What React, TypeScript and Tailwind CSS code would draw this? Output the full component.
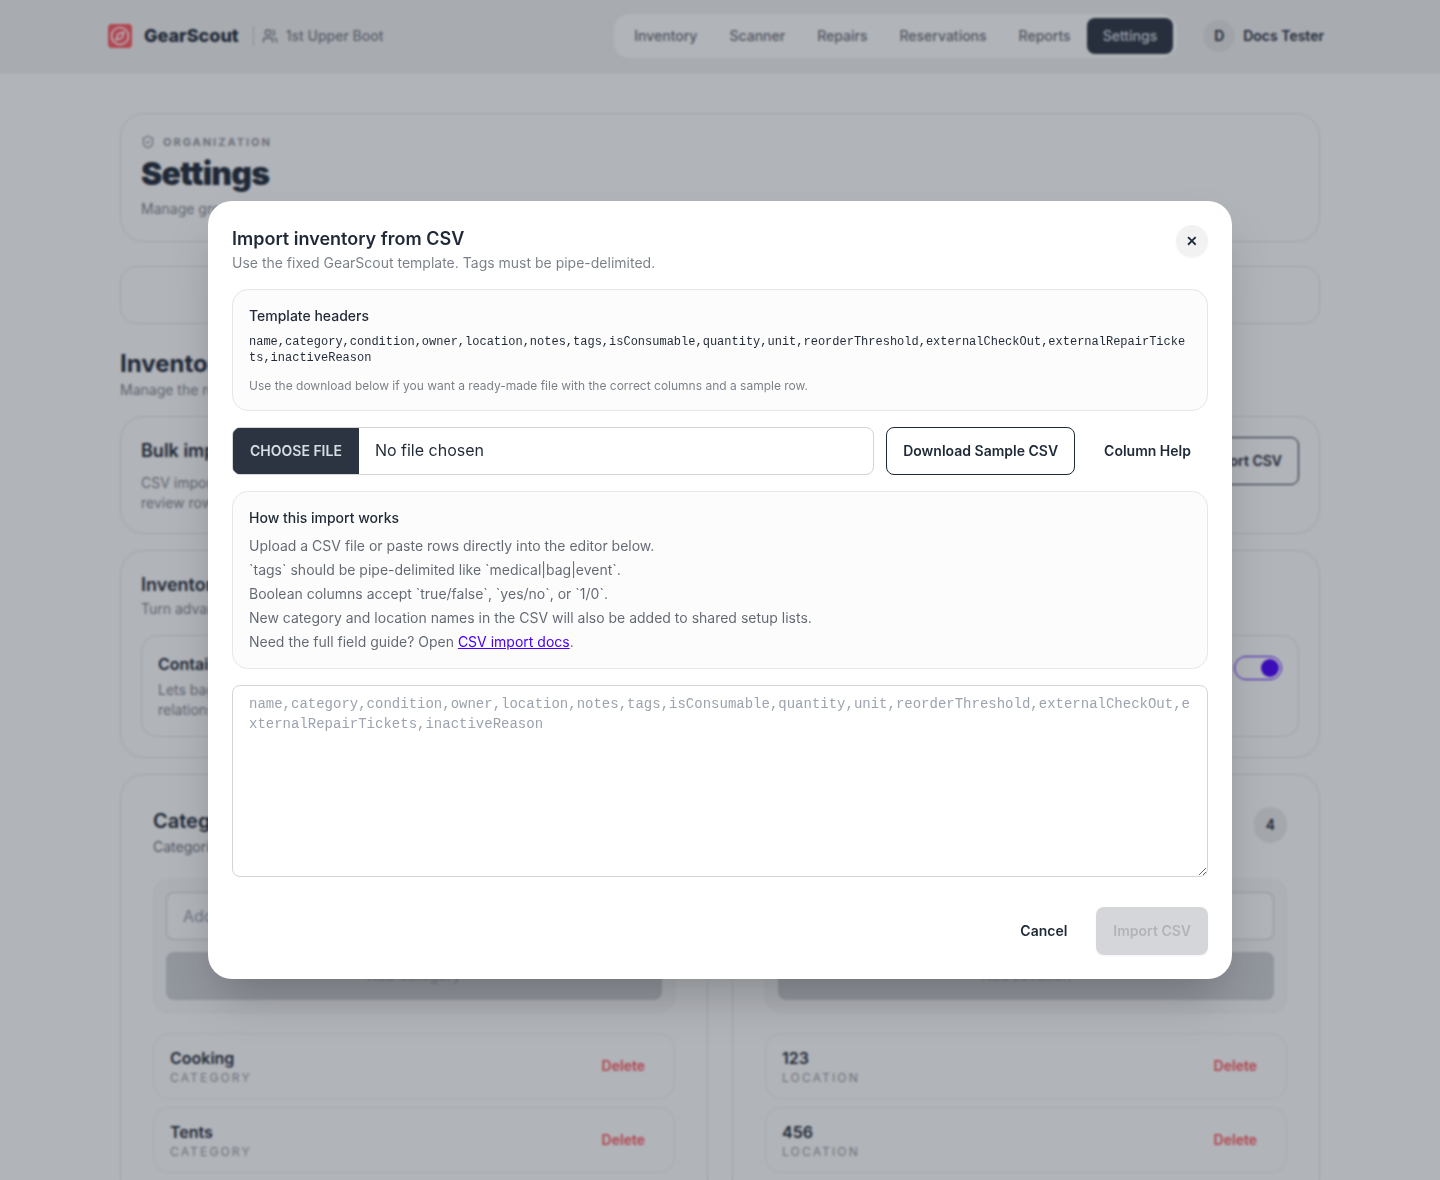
import { useState } from 'react';
import { ShieldCheck, Users } from 'lucide-react';

const HEADERS =
  'name,category,condition,owner,location,notes,tags,isConsumable,quantity,unit,reorderThreshold,externalCheckOut,externalRepairTickets,inactiveReason';

const navLinks = [
  'Inventory',
  'Scanner',
  'Repairs',
  'Reservations',
  'Reports',
  'Settings',
];

const lists = [
  {
    title: 'Categories',
    description: 'Categories in use.',
    singular: 'Category',
    count: 6,
    items: ['Cooking', 'Tents'],
  },
  {
    title: 'Locations',
    description: 'Locations in use.',
    singular: 'Location',
    count: 4,
    items: ['123', '456'],
  },
];

function Logo() {
  return (
    <svg viewBox="0 0 24 24" className="h-6 w-6" fill="none" aria-hidden="true">
      <rect width="24" height="24" rx="4" fill="#ff5861" />
      <circle cx="12" cy="12" r="8.5" stroke="#fff" strokeWidth="1.6" />
      <path
        d="M16 8l-1.6 4.9a2 2 0 0 1-1.5 1.5L8 16l1.600-4.900a2 2 0 0 1 1.500-1.500z"
        stroke="#fff"
        strokeWidth="1.6"
        strokeLinejoin="round"
      />
    </svg>
  );
}

function Header() {
  return (
    <header className="border-b border-[#e5e6e6] bg-[#f2f2f2]">
      <div className="mx-auto flex h-18 max-w-[1232px] items-center justify-between px-1">
        <div className="flex items-center">
          <a href="#" className="flex items-center gap-3 text-lg font-extrabold">
            <Logo />
            GearScout
          </a>
          <div className="ml-3.5 flex items-center gap-2 border-l border-[#1f2937]/20 pl-2 text-sm font-medium text-[#1f2937]/60">
            <Users size={16} />
            1st Upper Boot
          </div>
        </div>
        <div className="flex items-center gap-[18px]">
          <nav className="flex items-center rounded-2xl bg-white p-1">
            {navLinks.map((link) => (
              <a
                key={link}
                href="#"
                className={`rounded-lg px-4 py-2 text-sm font-medium ${
                  link === 'Settings'
                    ? 'bg-[#2b3440] text-[#d7dde4]'
                    : 'text-[#1f2937]/70'
                }`}
              >
                {link}
              </a>
            ))}
          </nav>
          <button className="flex items-center gap-2 px-2 text-sm font-semibold">
            <span className="grid h-8 w-8 place-items-center rounded-full bg-[#e5e6e6]">
              D
            </span>
            Docs Tester
          </button>
        </div>
      </div>
    </header>
  );
}

function ListCard({ list }: { list: (typeof lists)[number] }) {
  return (
    <section className="rounded-3xl border border-[#e5e6e6] p-8">
      <div className="flex items-start justify-between">
        <div>
          <h2 className="text-xl font-semibold">{list.title}</h2>
          <p className="text-sm leading-6 text-[#1f2937]/70">
            {list.description}
          </p>
        </div>
        <span className="grid h-9 w-[33px] place-items-center rounded-full bg-[#ececec] text-sm font-semibold">
          {list.count}
        </span>
      </div>
      <div className="mt-5 space-y-3 rounded-2xl border border-[#f2f2f2] bg-[#f9f9f9] p-3">
        <input
          type="text"
          aria-label={`Add ${list.singular}`}
          placeholder={`Add ${list.singular.toLowerCase()}`}
          className="block h-12 w-full rounded-lg border border-[#1f2937]/20 bg-white px-4 placeholder:text-[#9ca3af]"
        />
        <button
          disabled
          className="block h-12 w-full rounded-lg bg-[#2b3440]/20 text-sm font-semibold text-[#1f2937]/20"
        >
          Add {list.singular}
        </button>
      </div>
      <ul className="mt-5 space-y-2">
        {list.items.map((item) => (
          <li
            key={item}
            className="flex items-center justify-between rounded-2xl border border-[#f0f0f0] px-4 py-3"
          >
            <div>
              <p className="font-semibold">{item}</p>
              <p className="text-xs leading-4 tracking-[0.18em] text-[#1f2937]/50 uppercase">
                {list.singular}
              </p>
            </div>
            <button className="h-8 border border-transparent px-3 text-sm font-semibold text-[#ff5861]">
              Delete
            </button>
          </li>
        ))}
      </ul>
    </section>
  );
}

function SettingsPage() {
  return (
    <main className="mx-auto max-w-[1280px] px-10 pt-10">
      <section className="rounded-3xl border border-[#e5e6e6] p-5">
        <p className="flex items-center gap-2 text-[11px] leading-4 font-bold tracking-[0.18em] text-[#1f2937]/50 uppercase">
          <ShieldCheck size={14} />
          Organization
        </p>
        <h1 className="mt-1 text-[32px] leading-[39px] font-black tracking-tight">
          Settings
        </h1>
        <p className="mt-1 text-sm leading-6 text-[#1f2937]/60">
          Manage group details.
        </p>
      </section>
      <div className="mt-6 h-[58px] rounded-2xl border border-[#e5e6e6]" />

      <h2 className="mt-6 text-2xl font-bold">Inventory</h2>
      <p className="text-sm text-[#1f2937]/60">Manage the reusable lists.</p>

      <section className="mt-4 flex items-start justify-between rounded-3xl border border-[#e5e6e6] p-5">
        <div>
          <h3 className="text-lg font-semibold">Bulk import</h3>
          <div className="mt-2 text-sm text-[#1f2937]/60">
            <p>CSV import lets you</p>
            <p>review rows first.</p>
          </div>
        </div>
        <button className="h-12 rounded-lg border border-[#1f2937] px-4 text-sm font-semibold">
          Import CSV
        </button>
      </section>

      <section className="mt-4 rounded-3xl border border-[#e5e6e6] p-5">
        <h3 className="text-lg font-semibold">Inventory options</h3>
        <p className="text-sm text-[#1f2937]/60">Turn advanced tools on.</p>
        <label className="mt-4 flex items-start justify-between rounded-2xl border border-[#e5e6e6] p-4">
          <div>
            <p className="font-semibold">Containers</p>
            <div className="mt-1 text-sm text-[#1f2937]/60">
              <p>Lets bags have item</p>
              <p>relationships.</p>
            </div>
          </div>
          <input
            type="checkbox"
            defaultChecked
            className="mt-1 flex h-6 w-12 appearance-none items-center justify-end rounded-full border border-[#4a00ff] px-[2px] before:h-[18px] before:w-[18px] before:rounded-full before:bg-[#4a00ff]"
          />
        </label>
      </section>

      <div className="mt-4 grid grid-cols-2 gap-6">
        {lists.map((list) => (
          <ListCard key={list.title} list={list} />
        ))}
      </div>
    </main>
  );
}

function ImportDialog() {
  const [csv, setCsv] = useState('');

  return (
    <div className="fixed inset-0 grid place-items-center bg-[#1f2937]/35 backdrop-blur-[1px]">
      <div
        role="dialog"
        aria-labelledby="import-title"
        className="w-full max-w-5xl rounded-3xl bg-white p-6 shadow-2xl"
      >
        <div className="flex items-start justify-between">
          <div>
            <h3 id="import-title" className="text-lg font-semibold">
              Import inventory from CSV
            </h3>
            <p className="text-sm text-[#1f2937]/60">
              Use the fixed GearScout template. Tags must be pipe-delimited.
            </p>
          </div>
          <button
            aria-label="Close"
            className="grid h-8 w-8 place-items-center rounded-full bg-[#f2f2f2] text-sm font-semibold shadow-xs"
          >
            ✕
          </button>
        </div>

        <section className="mt-4 rounded-2xl border border-[#e5e6e6] bg-[#fcfcfc] p-4">
          <h4 className="text-sm font-medium">Template headers</h4>
          <code className="mt-2 block font-['Liberation_Mono',monospace] text-xs break-all">
            {HEADERS}
          </code>
          <p className="mt-3 text-xs text-[#1f2937]/60">
            Use the download below if you want a ready-made file with the
            correct columns and a sample row.
          </p>
        </section>

        <div className="mt-4 flex gap-3">
          <input
            type="file"
            aria-label="CSV file"
            className="h-12 min-w-0 grow overflow-hidden rounded-lg border border-[#1f2937]/20 pr-4 file:mr-4 file:h-full file:border file:border-solid file:border-[#2b3440] file:bg-[#2b3440] file:px-4 file:text-sm file:font-semibold file:text-[#d7dde4] file:uppercase"
          />
          <button className="h-12 rounded-lg border border-[#1f2937] px-4 text-sm font-semibold">
            Download Sample CSV
          </button>
          <button className="h-12 rounded-lg border border-transparent px-4 text-sm font-semibold">
            Column Help
          </button>
        </div>

        <section className="mt-4 rounded-2xl border border-[#e5e6e6] bg-[#fcfcfc] p-4">
          <h4 className="text-sm font-medium">How this import works</h4>
          <div className="mt-2 space-y-1 text-sm text-[#1f2937]/70">
            <p>Upload a CSV file or paste rows directly into the editor below.</p>
            <p>`tags` should be pipe-delimited like `medical|bag|event`.</p>
            <p>Boolean columns accept `true/false`, `yes/no`, or `1/0`.</p>
            <p>
              New category and location names in the CSV will also be added to
              shared setup lists.
            </p>
            <p>
              Need the full field guide? Open{' '}
              <a href="#" className="text-[#4a00ff] underline">
                CSV import docs
              </a>
              .
            </p>
          </div>
        </section>

        <textarea
          aria-label="CSV rows"
          value={csv}
          onChange={(e) => setCsv(e.target.value)}
          placeholder={HEADERS}
          className="mt-4 block h-48 w-full resize-y rounded-lg border border-[#1f2937]/20 px-4 py-2 font-['Liberation_Mono',monospace] text-sm break-all placeholder:text-[#9ca3af]"
        />

        <div className="mt-[30px] flex justify-end gap-3">
          <button className="h-12 rounded-lg border border-transparent px-4 text-sm font-semibold">
            Cancel
          </button>
          <button
            disabled={!csv}
            className="h-12 rounded-lg px-[17px] text-sm font-semibold shadow-xs disabled:bg-[#2b3440]/20 disabled:text-[#1f2937]/20"
          >
            Import CSV
          </button>
        </div>
      </div>
    </div>
  );
}

function App() {
  return (
    <div className="h-screen overflow-hidden bg-white font-['Inter',sans-serif] text-[#1f2937]">
      <Header />
      <SettingsPage />
      <ImportDialog />
    </div>
  );
}

export default App;
